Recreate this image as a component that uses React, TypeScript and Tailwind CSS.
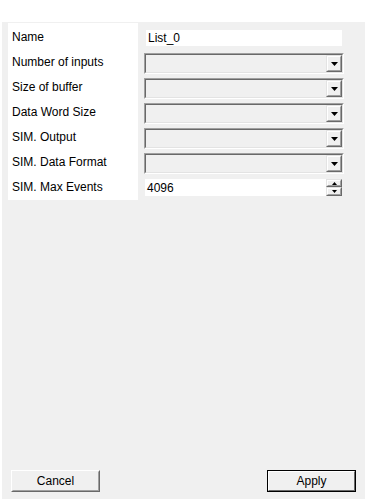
const labels = [
  "Name",
  "Number of inputs",
  "Size of buffer",
  "Data Word Size",
  "SIM. Output",
  "SIM. Data Format",
  "SIM. Max Events",
]

function Arrow({ up = false, small = false }: { up?: boolean; small?: boolean }) {
  const w = small ? 5 : 7
  const h = small ? 3 : 4
  return (
    <svg width={w} height={h} viewBox={`0 0 ${w} ${h}`} className="block">
      {up ? (
        <polygon points={`${w / 2},0 ${w},${h} 0,${h}`} fill="#000" />
      ) : (
        <polygon points={`0,0 ${w},0 ${w / 2},${h}`} fill="#000" />
      )}
    </svg>
  )
}

function RaisedBox({ children, className }: { children?: React.ReactNode; className: string }) {
  return (
    <div className={`border border-t-[#e3e3e3] border-l-[#e3e3e3] border-b-[#696969] border-r-[#696969] ${className}`}>
      <div className="flex h-full w-full items-center justify-center border border-t-white border-l-white border-b-[#a0a0a0] border-r-[#a0a0a0] bg-[#f0f0f0]">
        {children}
      </div>
    </div>
  )
}

function Combo() {
  return (
    <div className="h-[21px] w-[200px] border border-t-[#a0a0a0] border-l-[#a0a0a0] border-b-white border-r-white">
      <div className="flex h-full w-full justify-end border border-t-[#696969] border-l-[#696969] border-b-[#e3e3e3] border-r-[#e3e3e3] bg-[#f0f0f0]">
        <RaisedBox className="h-[17px] w-[16px]">
          <Arrow />
        </RaisedBox>
      </div>
    </div>
  )
}

export default function App() {
  return (
    <div
      className="h-[501px] w-[368px] bg-white pt-[22px] pl-[2px] text-[12px] text-black"
      style={{ fontFamily: '"Liberation Sans", Arial, sans-serif' }}
    >
      <div className="flex h-[477px] w-[363px] flex-col justify-between bg-[#f0f0f0]">
        <div className="flex pt-[1px]">
          <div className="ml-[6px] w-[130px] bg-white pt-[1px]">
            {labels.map((label) => (
              <div key={label} className="flex h-[25px] items-center pl-[4px]">
                {label}
              </div>
            ))}
          </div>

          <div className="ml-[6px] pt-[2px]">
            <div className="flex h-[25px] items-center">
              <div className="ml-[2px] flex h-[16px] w-[196px] items-center bg-white pl-[2px]">
                List_0
              </div>
            </div>

            {[1, 2, 3, 4, 5].map((n) => (
              <div key={n} className="flex h-[25px] items-end pb-[1px]">
                <Combo />
              </div>
            ))}

            <div className="flex h-[25px] items-center">
              <div className="ml-[1px] flex h-[17px] w-[181px] items-center bg-white pl-[2px]">
                4096
              </div>
              <div className="flex h-[17px] flex-col">
                <RaisedBox className="h-[8px] w-[16px]">
                  <Arrow up small />
                </RaisedBox>
                <RaisedBox className="h-[9px] w-[16px]">
                  <Arrow small />
                </RaisedBox>
              </div>
            </div>
          </div>
        </div>

        <div className="flex justify-between pb-[7px] pl-[9px] pr-[9px]">
          <div className="h-[22px] w-[89px] border border-t-white border-l-white border-b-[#696969] border-r-[#696969]">
            <div className="flex h-full w-full items-center justify-center border border-t-[#f0f0f0] border-l-[#f0f0f0] border-b-[#a0a0a0] border-r-[#a0a0a0]">
              Cancel
            </div>
          </div>
          <div className="h-[22px] w-[89px] border border-black">
            <div className="flex h-full w-full items-center justify-center border border-t-white border-l-white border-b-[#696969] border-r-[#696969]">
              Apply
            </div>
          </div>
        </div>
      </div>
    </div>
  )
}
